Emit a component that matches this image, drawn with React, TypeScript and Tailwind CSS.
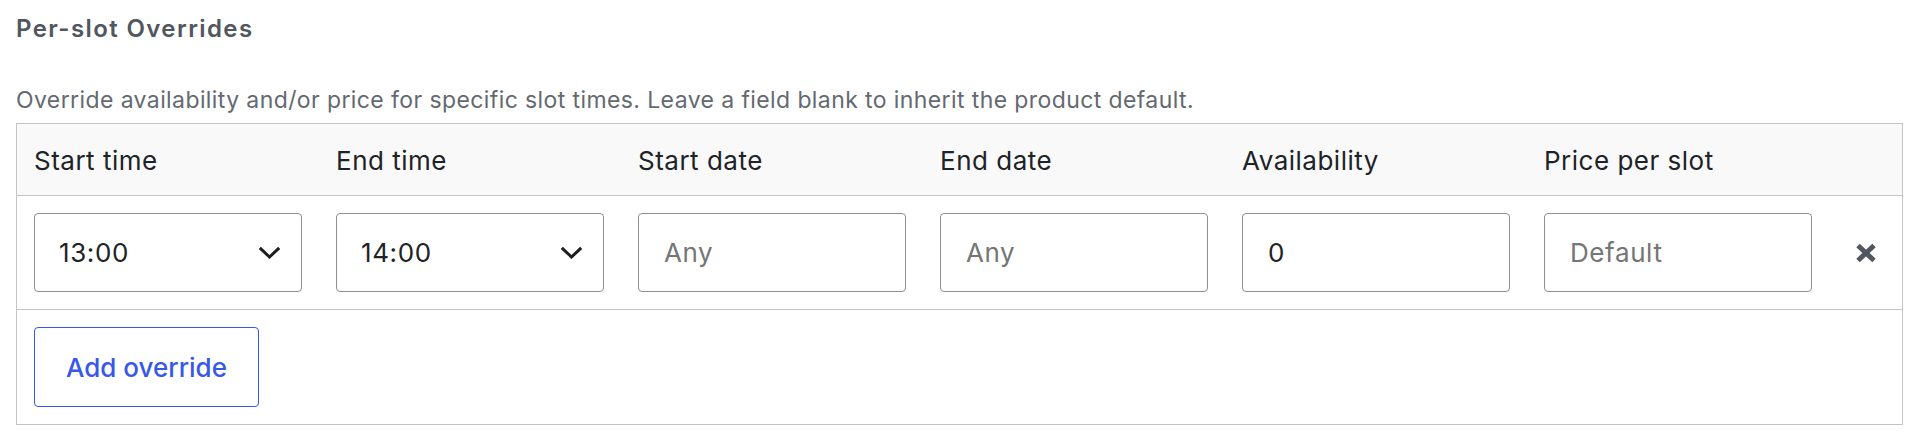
import React from "react";

const font = { fontFamily: "Inter, 'Noto Sans', sans-serif" };

function Chevron() {
  return (
    <svg width="23" height="13" viewBox="0 0 23 13" fill="none">
      <polyline points="1.8,1.8 11.5,11 21.2,1.8" stroke="#1e1e1e" strokeWidth="3" strokeLinecap="butt" strokeLinejoin="miter" />
    </svg>
  );
}

function CloseX() {
  return (
    <svg width="22" height="20" viewBox="0 0 22 20" fill="none">
      <path d="M3 2.5 L19 17.5 M19 2.5 L3 17.5" stroke="#50575e" strokeWidth="5" strokeLinecap="butt" />
    </svg>
  );
}

function SelectBox({ value }: { value: string }) {
  return (
    <div className="flex h-[79px] w-[268px] items-center justify-between rounded-[4px] border border-[#8c8f94] bg-white pl-[24px] pr-[20px] text-[26px] tracking-[0.6px] text-[#1d2327]">
      <span>{value}</span>
      <Chevron />
    </div>
  );
}

function TextBox({ value, placeholder }: { value?: string; placeholder: string }) {
  return (
    <input
      type="text"
      defaultValue={value}
      placeholder={placeholder}
      readOnly
      style={font}
      className="h-[79px] w-[268px] rounded-[4px] border border-[#8c8f94] bg-white px-[25px] text-[26px] tracking-[0.6px] text-[#1d2327] outline-none placeholder:text-[#757575]"
    />
  );
}

export default function App() {
  const headers = ["Start time", "End time", "Start date", "End date", "Availability", "Price per slot"];
  return (
    <div style={font} className="min-h-[436px] w-[1920px] bg-white pl-[16px] pr-[17px] pt-[14px]">
      <h3 className="text-[24px] font-semibold leading-[30px] tracking-[1.4px] text-[#50575e]">Per-slot Overrides</h3>
      <p className="mt-[41px] text-[23px] leading-[30px] tracking-[0.4px] text-[#646970]">
        Override availability and/or price for specific slot times. Leave a field blank to inherit the product default.
      </p>
      <div className="mt-[8px] border border-[#c3c4c7]">
        <div className="grid h-[72px] grid-cols-[302px_302px_302px_302px_302px_302px_1fr] items-center border-b border-[#c3c4c7] bg-[#f9f9f9] pt-[2px] text-[26px] tracking-[0.5px] text-[#1d2327]">
          {headers.map((h) => (
            <div key={h} className="pl-[17px]">
              {h}
            </div>
          ))}
          <div />
        </div>
        <div className="grid grid-cols-[302px_302px_302px_302px_302px_302px_1fr] items-center border-b border-[#c3c4c7] py-[17px]">
          <div className="pl-[17px]">
            <SelectBox value="13:00" />
          </div>
          <div className="pl-[17px]">
            <SelectBox value="14:00" />
          </div>
          <div className="pl-[17px]">
            <TextBox placeholder="Any" />
          </div>
          <div className="pl-[17px]">
            <TextBox placeholder="Any" />
          </div>
          <div className="pl-[17px]">
            <TextBox value="0" placeholder="" />
          </div>
          <div className="pl-[17px]">
            <TextBox placeholder="Default" />
          </div>
          <div className="flex items-center pl-[26px]">
            <CloseX />
          </div>
        </div>
        <div className="p-[17px]">
          <button
            type="button"
            style={font}
            className="h-[80px] w-[225px] rounded-[4px] border-[1.5px] border-[#3858e9] bg-white text-[26px] font-medium text-[#3858e9]"
          >
            Add override
          </button>
        </div>
      </div>
    </div>
  );
}
